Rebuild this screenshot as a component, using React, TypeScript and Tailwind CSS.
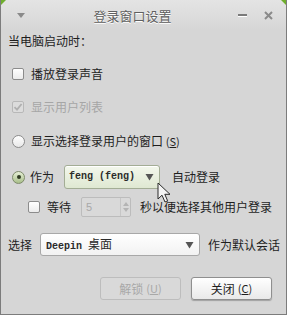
import React from 'react'

const cjk = '"Noto Sans CJK SC", "Noto Sans", sans-serif'
const mono = '"Liberation Mono", "Noto Sans CJK SC", monospace'

const CheckBox = ({ checked = false, disabled = false }: { checked?: boolean; disabled?: boolean }) => (
  <span
    className={`relative flex h-[12px] w-[12px] shrink-0 items-center justify-center rounded-[2px] border ${
      disabled ? 'border-[#b8b8b8] bg-[#dcdcdc]' : 'border-[#8c8c8c] bg-gradient-to-b from-[#ffffff] to-[#ececec]'
    }`}
  >
    {checked && (
      <svg width="10" height="10" viewBox="0 0 10 10">
        <path d="M1.5 5.2 L4 7.6 L8.6 2" fill="none" stroke={disabled ? '#b0b0b0' : '#333'} strokeWidth="1.8" />
      </svg>
    )}
  </span>
)

const Radio = ({ checked = false }: { checked?: boolean }) => (
  <span
    className={`flex h-[13px] w-[13px] shrink-0 items-center justify-center rounded-full border ${
      checked ? 'border-[#7d8a6a] bg-gradient-to-b from-[#e6efd6] to-[#a9bf8a]' : 'border-[#8c8c8c] bg-gradient-to-b from-[#ffffff] to-[#e8e8e8]'
    }`}
  >
    {checked && <span className="h-[4px] w-[4px] rounded-full bg-[#2f3a22]" />}
  </span>
)

const Arrow = ({ color = '#555' }: { color?: string }) => (
  <svg width="9" height="8" viewBox="0 0 9 8" className="shrink-0">
    <path d="M0.5 1 L8.5 1 L4.5 7.5 Z" fill={color} />
  </svg>
)

export default function App() {
  return (
    <div
      className="relative flex h-[315px] w-[287px] flex-col overflow-hidden whitespace-nowrap border-x border-b border-[#7c7c7c] bg-[#d6d6d6] text-[12px] leading-none text-[#1e1e1e]"
      style={{ fontFamily: cjk }}
    >
      {/* title bar */}
      <div className="relative flex h-[30px] shrink-0 items-center bg-gradient-to-b from-[#e4e4e4] to-[#d6d6d6] px-[14px]">
        <span className="absolute left-0 top-0 h-0 w-0 border-r-[5px] border-t-[5px] border-r-transparent border-t-[#6fae2c]" />
        <span className="absolute right-0 top-0 h-0 w-0 border-l-[5px] border-t-[5px] border-l-transparent border-t-[#6fae2c]" />
        <span className="flex w-[12px] justify-center">
          <svg width="8" height="5" viewBox="0 0 8 5">
            <path d="M0 0 L8 0 L4 5 Z" fill="#8a8a8a" />
          </svg>
        </span>
        <span className="flex-1 text-center text-[13px] text-[#606060] [text-shadow:0_1px_0_#ffffff]">登录窗口设置</span>
        <span className="mr-[17px] h-[2px] w-[9px] bg-[#7a7a7a] shadow-[0_1px_0_#fff]" />
        <svg width="9" height="9" viewBox="0 0 9 9" className="mr-[-1px]">
          <path d="M1 1 L8 8 M8 1 L1 8" stroke="#8a8a8a" strokeWidth="2" />
        </svg>
      </div>

      <div className="flex flex-col px-[7px]">
        <div className="mt-[1px] flex h-[20px] items-center">当电脑启动时：</div>

        <div className="mt-[13px] flex h-[20px] items-center gap-[7px] pl-[4px]">
          <CheckBox />
          <span>播放登录声音</span>
        </div>

        <div className="mt-[13px] flex h-[20px] items-center gap-[7px] pl-[4px] text-[#a6a6a6]">
          <CheckBox checked disabled />
          <span>显示用户列表</span>
        </div>

        <div className="mt-[14px] flex h-[20px] items-center gap-[6px] pl-[4px]">
          <Radio />
          <span>
            显示选择登录用户的窗口 <span className="text-[11px]">(<span className="underline">S</span>)</span>
          </span>
        </div>

        <div className="mt-[14px] flex h-[24px] items-center pl-[4px]">
          <Radio checked />
          <span className="ml-[5px]">作为</span>
          <div className="ml-[10px] flex h-[24px] w-[96px] shrink-0 items-center rounded-[3px] border border-[#a3ad95] bg-gradient-to-b from-[#f3f7ec] to-[#dfe8d2] pl-[4px] pr-[5px] shadow-[inset_0_1px_0_#fff]">
            <span className="flex-1 text-[10px] font-bold text-[#2b2b2b]" style={{ fontFamily: mono }}>
              feng (feng)
            </span>
            <Arrow />
          </div>
          <span className="ml-[12px]">自动登录</span>
        </div>

        <div className="mt-[8px] flex h-[20px] items-center pl-[20px]">
          <CheckBox />
          <span className="ml-[7px]">等待</span>
          <div className="ml-[10px] flex h-[20px] w-[50px] shrink-0 items-center rounded-[2px] border border-[#bcbcbc] bg-[#d9d9d9]">
            <span className="flex-1 pl-[4px] text-[11px] text-[#a8a8a8]" style={{ fontFamily: '"Liberation Sans", sans-serif' }}>
              5
            </span>
            <div className="flex h-full w-[10px] flex-col items-center justify-center gap-[2px] border-l border-[#c6c6c6]">
              <svg width="6" height="4" viewBox="0 0 6 4">
                <path d="M0 4 L6 4 L3 0 Z" fill="#b4b4b4" />
              </svg>
              <svg width="6" height="4" viewBox="0 0 6 4">
                <path d="M0 0 L6 0 L3 4 Z" fill="#b4b4b4" />
              </svg>
            </div>
          </div>
          <span className="ml-[9px]">秒以便选择其他用户登录</span>
        </div>

        <div className="mt-[16px] flex h-[23px] items-center">
          <span className="shrink-0">选择</span>
          <div className="ml-[8px] flex h-[23px] w-[160px] shrink-0 items-center rounded-[3px] border border-[#a8a8a8] bg-gradient-to-b from-[#ffffff] to-[#f2f2f2] pl-[5px] pr-[5px]">
            <span className="flex-1 text-[10px] font-bold text-[#2b2b2b]" style={{ fontFamily: mono }}>
              Deepin <span className="text-[12px] font-normal" style={{ fontFamily: cjk }}>桌面</span>
            </span>
            <Arrow />
          </div>
          <span className="ml-[8px] shrink-0">作为默认会话</span>
        </div>

        <div className="mt-[21px] flex h-[23px] justify-end gap-[10px] pr-[7px]">
          <button className="flex h-[23px] w-[81px] items-center justify-center rounded-[3px] border border-[#bdbdbd] bg-[#d9d9d9] text-[#a8a8a8]">
            解锁 <span className="ml-[3px] text-[11px]">(<span className="underline">U</span>)</span>
          </button>
          <button className="flex h-[23px] w-[81px] items-center justify-center rounded-[3px] border border-[#8f8f8f] bg-gradient-to-b from-[#ffffff] to-[#e9e9e9] shadow-[0_1px_1px_rgba(0,0,0,0.25)]">
            关闭 <span className="ml-[3px] text-[11px]">(<span className="underline">C</span>)</span>
          </button>
        </div>
      </div>

      {/* mouse pointer */}
      <svg className="absolute left-[156px] top-[182px]" width="14" height="22" viewBox="0 0 14 22">
        <path d="M1 1 L1 17 L5 13.2 L8 20 L10.6 18.8 L7.8 12.3 L13 12.3 Z" fill="#f4f4f4" stroke="#2a2a2a" strokeWidth="1" strokeLinejoin="round" />
      </svg>
    </div>
  )
}
